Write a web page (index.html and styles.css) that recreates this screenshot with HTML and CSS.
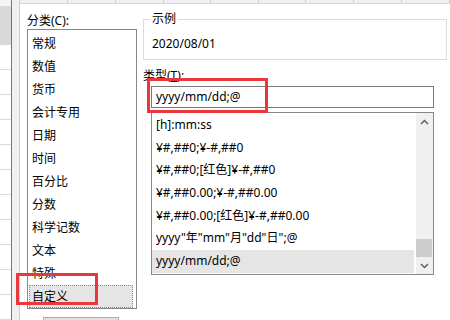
FILE: index.html
```html
<!DOCTYPE html>
<html lang="zh-CN">
<head>
<meta charset="utf-8">
<title>设置单元格格式</title>
<link rel="stylesheet" href="styles.css">
</head>
<body>
<div class="screen">
  <div class="sheet">
    <div class="sheet-top"></div>
    <div class="sheet-head"></div>
    <div class="sheet-row"></div>
    <div class="sheet-row"></div>
    <div class="sheet-row"></div>
    <div class="sheet-row"></div>
    <div class="sheet-row"></div>
    <div class="sheet-row"></div>
    <div class="sheet-row"></div>
    <div class="sheet-row"></div>
    <div class="sheet-row"></div>
    <div class="sheet-row"></div>
    <div class="sheet-row"></div>
  </div>
  <div class="frame-blue"></div>
  <div class="frame-grey"></div>
  <div class="main">
    <div class="colheads">
      <span class="colhead w48"></span>
      <span class="colhead w48"></span>
      <span class="colhead w48"></span>
      <span class="colhead w47"></span>
      <span class="colhead w48"></span>
      <span class="colhead w47"></span>
      <span class="colhead w48"></span>
      <span class="colhead w48"></span>
      <span class="colhead w48"></span>
    </div>
    <div class="dialog">
      <div class="cat-col">
        <div class="label">分类(C):</div>
        <ul class="cat-list">
          <li class="cat-item">常规</li>
          <li class="cat-item">数值</li>
          <li class="cat-item">货币</li>
          <li class="cat-item">会计专用</li>
          <li class="cat-item">日期</li>
          <li class="cat-item">时间</li>
          <li class="cat-item">百分比</li>
          <li class="cat-item">分数</li>
          <li class="cat-item">科学记数</li>
          <li class="cat-item">文本</li>
          <li class="cat-item">特殊</li>
          <li class="cat-item selected">自定义</li>
        </ul>
        <div class="btn"></div>
      </div>
      <div class="fmt-col">
        <fieldset class="sample">
          <legend class="sample-legend">示例</legend>
          <div class="sample-value">2020/08/01</div>
        </fieldset>
        <div class="label type-label">类型(<span class="ul">T</span>):</div>
        <div class="type-input">yyyy/mm/dd;@</div>
        <div class="fmt-list">
          <ul class="fmt-items">
            <li class="fmt-item">[h]:mm:ss</li>
            <li class="fmt-item">¥#,##0;¥-#,##0</li>
            <li class="fmt-item">¥#,##0;[红色]¥-#,##0</li>
            <li class="fmt-item">¥#,##0.00;¥-#,##0.00</li>
            <li class="fmt-item">¥#,##0.00;[红色]¥-#,##0.00</li>
            <li class="fmt-item">yyyy"年"mm"月"dd"日";@</li>
            <li class="fmt-item selected">yyyy/mm/dd;@</li>
          </ul>
          <div class="scrollbar">
            <div class="sb-btn">
              <svg width="9" height="6" viewBox="0 0 9 6"><polyline points="1,5 4.5,1.5 8,5" fill="none" stroke="#606060" stroke-width="1.5"/></svg>
            </div>
            <div class="sb-track"><div class="sb-thumb"></div></div>
            <div class="sb-btn">
              <svg width="9" height="6" viewBox="0 0 9 6"><polyline points="1,1 4.5,4.5 8,1" fill="none" stroke="#606060" stroke-width="1.5"/></svg>
            </div>
          </div>
        </div>
      </div>
    </div>
  </div>
  <div class="mark mark-cat"></div>
  <div class="mark mark-type"></div>
</div>
</body>
</html>
```
FILE: styles.css
```css
* { box-sizing: border-box; }
html, body { margin: 0; padding: 0; background: #fff; }
body {
  font-family: "Noto Sans", "Noto Sans CJK SC", sans-serif;
  font-size: 12px;
  color: #000;
}
.screen {
  position: relative;
  display: flex;
  width: 450px;
  height: 320px;
  overflow: hidden;
}
.sheet { width: 11px; flex: none; background: #fff; }
.sheet-top { height: 6px; background: #f4f4f4; }
.sheet-head { height: 39px; background: #d9d9d9; }
.sheet-row { height: 25px; border-bottom: 1px solid #dadada; }
.frame-blue { width: 1px; flex: none; background: #3c7fd3; }
.frame-grey { width: 8px; flex: none; background: #f0f0f0; border-right: 1px solid #cdcdcd; }
.main { flex: 1; min-width: 0; }
.colheads {
  display: flex;
  height: 4px;
  background: #f0f0f0;
  border-bottom: 1px solid #d6d6d6;
}
.colhead { flex: none; height: 3px; border-right: 1px solid #d0d0d0; }
.w48 { width: 48px; }
.w47 { width: 47px; }
.dialog { display: flex; padding-left: 7px; }
.label { height: 16px; line-height: 16px; white-space: nowrap; }
.cat-col { width: 110px; flex: none; padding-top: 9px; }
.cat-list {
  list-style: none;
  margin: 0;
  height: 280px;
  border: 1px solid #828790;
  padding: 2px 3px 0 1px;
}
.cat-item { height: 23px; line-height: 23px; padding-left: 3px; white-space: nowrap; }
.cat-item.selected { background: #e5e5e5; outline: 1px dotted #8a8a8a; outline-offset: -1px; }
.btn {
  margin: 8px 0 0 16px;
  width: 76px;
  height: 23px;
  border: 1px solid #adadad;
  background: #e1e1e1;
}
.fmt-col { width: 304px; flex: none; margin-left: 6px; padding-top: 7px; }
.sample {
  margin: 0;
  width: 304px;
  border: 1px solid #dcdcdc;
  padding: 9px 8px 7px 8px;
  min-inline-size: 0;
}
.sample-legend { padding: 0 2px; margin-left: -2px; line-height: 16px; }
.sample-value { line-height: 16px; height: 16px; }
.type-label { margin-top: 8px; }
.ul { text-decoration: underline; }
.type-input {
  margin: 2px 0 0 8px;
  width: 283px;
  height: 22px;
  border: 1px solid #7a7a7a;
  padding-left: 4px;
  line-height: 20px;
}
.fmt-list {
  display: flex;
  margin: 4px 0 0 8px;
  width: 283px;
  height: 163px;
  border: 1px solid #828790;
}
.fmt-items {
  list-style: none;
  margin: 0 2px 0 0;
  padding: 1px 0 0 0;
  width: 262px;
  flex: none;
  overflow: hidden;
}
.fmt-item { height: 22.7px; line-height: 22.7px; padding-left: 4px; white-space: nowrap; }
.fmt-item.selected { background: #e5e5e5; }
.scrollbar {
  width: 17px;
  flex: none;
  display: flex;
  flex-direction: column;
  background: #f0f0f0;
}
.sb-btn { height: 17px; flex: none; display: flex; align-items: center; justify-content: center; }
.sb-btn svg { display: block; }
.sb-track { flex: 1; display: flex; flex-direction: column; justify-content: flex-end; }
.sb-thumb { height: 18px; margin: 0 1px 0 0; background: #cdcdcd; }
.mark { position: absolute; border: 3px solid #e8383b; }
.mark-cat { left: 16px; top: 273px; width: 82px; height: 32px; }
.mark-type { left: 147px; top: 78px; width: 121px; height: 35px; }
```
